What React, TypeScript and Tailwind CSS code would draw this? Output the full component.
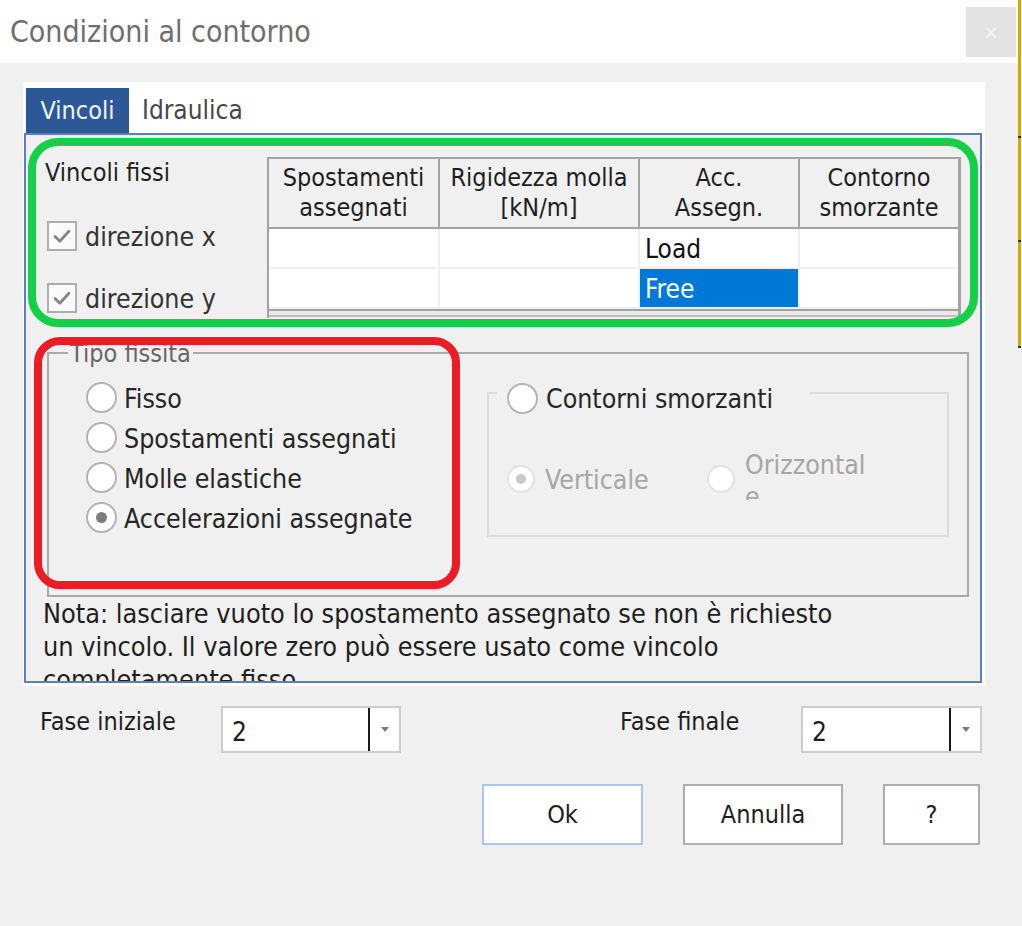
import React from 'react';

const FONT = "font-['DejaVu_Sans_Condensed','DejaVu_Sans',sans-serif]";

function CheckBox() {
  return (
    <div className="flex h-[30px] w-[30px] items-center justify-center border-2 border-[#adadad] bg-[#fafafa]">
      <svg viewBox="0 0 30 30" className="h-[28px] w-[28px]">
        <path d="M7 15.5 L12.5 21 L23 9.5" fill="none" stroke="#858585" strokeWidth="3.2" strokeLinecap="round" strokeLinejoin="round" />
      </svg>
    </div>
  );
}

function Radio({ checked = false, disabled = false }: { checked?: boolean; disabled?: boolean }) {
  return (
    <div
      className={
        disabled
          ? 'flex h-[28px] w-[28px] shrink-0 items-center justify-center rounded-full border-2 border-[#e2e2e2] bg-white'
          : 'flex h-[31px] w-[31px] shrink-0 items-center justify-center rounded-full border-2 border-[#b4b4b4] bg-white'
      }
    >
      {checked && (
        <div className={disabled ? 'h-[10px] w-[10px] rounded-full bg-[#c8c8c8]' : 'h-[11px] w-[11px] rounded-full bg-[#7d7d7d]'} />
      )}
    </div>
  );
}

function Combo({ value, width }: { value: string; width: string }) {
  return (
    <div className={`flex h-[47px] items-center border-2 border-[#cdcdcd] bg-white ${width}`}>
      <span className="flex-1 pl-[9px] pt-[4px] text-[26px] leading-none text-[#1e1e1e]">{value}</span>
      <div className="h-[43px] w-[2px] bg-[#1a1a1a]" />
      <div className="flex w-[29px] items-center justify-center">
        <svg viewBox="0 0 8 5" className="h-[5px] w-[8px]">
          <path d="M0 0 L8 0 L4 5 Z" fill="#7a7a7a" />
        </svg>
      </div>
    </div>
  );
}

const headers = [
  ['Spostamenti', 'assegnati'],
  ['Rigidezza molla', '[kN/m]'],
  ['Acc.', 'Assegn.'],
  ['Contorno', 'smorzante'],
];
const colWidths = ['w-[171px]', 'w-[200px]', 'w-[160px]', 'w-[158px]'];

function BoundaryGrid() {
  return (
    <div className="flex h-[161px] w-[694px] flex-col border-t-2 border-l-2 border-r-[3px] border-[#a3a3a3] bg-[#f0f0f0]">
      <div className="flex h-[70px] border-b-2 border-[#a3a3a3]">
        {headers.map((h, i) => (
          <div
            key={i}
            className={`flex flex-col items-center justify-center text-[25px] leading-[30px] text-[#1e1e1e] ${colWidths[i]} ${i < 3 ? 'border-r-2 border-[#a3a3a3]' : ''}`}
          >
            <span>{h[0]}</span>
            <span>{h[1]}</span>
          </div>
        ))}
      </div>
      {[
        ['', '', 'Load', ''],
        ['', '', 'Free', ''],
      ].map((row, r) => (
        <div key={r} className="flex h-[40px] border-b-2 border-[#f0f0f0] bg-white">
          {row.map((cell, c) => {
            const selected = cell === 'Free';
            return (
              <div
                key={c}
                className={`flex items-center pl-[5px] pt-[2px] text-[26px] ${colWidths[c]} ${c < 3 ? 'border-r-2 border-[#f0f0f0]' : ''} ${
                  selected ? 'bg-[#0078d7] text-white' : 'text-[#111]'
                }`}
              >
                {cell}
              </div>
            );
          })}
        </div>
      ))}
      <div className="h-[2px] bg-[#a3a3a3]" />
      <div className="h-[4px] bg-[#e9e9e9]" />
      <div className="h-[2px] bg-[#bdbdbd]" />
    </div>
  );
}

export default function App() {
  return (
    <div className={`relative flex h-[926px] w-[1022px] overflow-hidden bg-white ${FONT}`}>
      <div className="flex h-full w-[1018px] flex-col">
        {/* title bar */}
        <div className="flex h-[63px] shrink-0 items-start justify-between bg-white">
          <div className="pl-[10px] pt-[15px] text-[30px] leading-[34px] text-[#6e6e6e]">Condizioni al contorno</div>
          <div className="mr-[2px] mt-[7px] flex h-[50px] w-[50px] items-center justify-center bg-[#e3e3e3] text-[20px] text-[#f6f6f6]">×</div>
        </div>

        {/* dialog body */}
        <div className="flex flex-1 flex-col bg-[#f0f0f0]">
          {/* tab control */}
          <div className="ml-[23px] mt-[19px] flex h-[604px] w-[962px] flex-col bg-white">
            <div className="flex h-[51px] items-end pl-[3px]">
              <div className="flex h-[45px] w-[103px] items-center justify-center bg-[#2c5898] text-[25px] text-[#f2f5fb]">Vincoli</div>
              <div className="flex h-[45px] items-center pl-[13px] text-[26px] text-[#474747]">Idraulica</div>
            </div>

            <div className="ml-[1px] flex h-[550px] w-[958px] flex-col overflow-hidden border-2 border-[#5b7fbd] bg-[#f0f0f0]">
              {/* fixed constraints + grid */}
              <div className="flex pt-[22px]">
                <div className="flex w-[241px] flex-col pl-[19px] text-[#1e1e1e]">
                  <div className="text-[25px] leading-[32px]">Vincoli fissi</div>
                  <div className="mt-[32px] flex h-[30px] items-center gap-[8px] pl-[2px]">
                    <CheckBox />
                    <span className="pt-[2px] text-[26.5px] text-[#333]">direzione x</span>
                  </div>
                  <div className="mt-[32px] flex h-[30px] items-center gap-[8px] pl-[2px]">
                    <CheckBox />
                    <span className="pt-[2px] text-[26.5px] text-[#333]">direzione y</span>
                  </div>
                </div>
                <BoundaryGrid />
              </div>

              {/* Tipo fissita group */}
              <div className="relative ml-[21px] mt-[34px] h-[245px] w-[922px] shrink-0 border-2 border-[#a9a9a9]">
                <div className="absolute left-[19px] top-[-15px] bg-[#f0f0f0] px-[2px] text-[25px] leading-[30px] text-[#666]">Tipo fissita</div>

                <div className="flex flex-col gap-[9px] pl-[37px] pt-[28px]">
                  {['Fisso', 'Spostamenti assegnati', 'Molle elastiche', 'Accelerazioni assegnate'].map((label, i) => (
                    <div key={label} className="flex h-[31px] items-center gap-[7px]">
                      <Radio checked={i === 3} />
                      <span className="pt-[2px] text-[26.5px] text-[#262626]">{label}</span>
                    </div>
                  ))}
                </div>

                {/* damping boundaries sub-group */}
                <div className="absolute left-[438px] top-[38px] h-[145px] w-[462px] border-2 border-[#dcdcdc]">
                  <div className="absolute left-[8px] top-[-12px] flex h-[32px] w-[313px] items-center gap-[8px] bg-[#f0f0f0] pl-[10px]">
                    <Radio />
                    <span className="pt-[2px] text-[26.5px] text-[#262626]">Contorni smorzanti</span>
                  </div>
                  <div className="flex pl-[18px] pt-[70px]">
                    <div className="flex h-[30px] w-[200px] items-center gap-[10px]">
                      <Radio checked disabled />
                      <span className="pt-[2px] text-[26.5px] text-[#a6a6a6]">Verticale</span>
                    </div>
                    <div className="flex h-[30px] items-center gap-[10px]">
                      <Radio disabled />
                      <div className="mt-[-5px] h-[47px] w-[130px] overflow-hidden">
                        <div className="mt-[-4px] text-[26.5px] leading-[32px] text-[#a6a6a6]">
                          Orizzontal
                          <br />e
                        </div>
                      </div>
                    </div>
                  </div>
                </div>
              </div>

              {/* note */}
              <div className="pl-[17px] text-[26.8px] leading-[33px] text-[#1e1e1e]">
                <div className="whitespace-nowrap">Nota: lasciare vuoto lo spostamento assegnato se non è richiesto</div>
                <div className="whitespace-nowrap">un vincolo. Il valore zero può essere usato come vincolo</div>
                <div className="whitespace-nowrap">completamente fisso.</div>
              </div>
            </div>
          </div>

          {/* phase selectors */}
          <div className="mt-[20px] flex items-start pl-[40px] text-[#1e1e1e]">
            <div className="w-[181px] pt-[1px] text-[25px] leading-[30px]">Fase iniziale</div>
            <Combo value="2" width="w-[180px]" />
            <div className="ml-[219px] w-[181px] pt-[1px] text-[25px] leading-[30px]">Fase finale</div>
            <Combo value="2" width="w-[181px]" />
          </div>

          {/* buttons */}
          <div className="ml-[482px] mt-[31px] flex gap-[40px] text-[25px] text-[#1e1e1e]">
            <button className="flex h-[61px] w-[161px] items-center justify-center border-2 border-[#aac6ef] bg-white">Ok</button>
            <button className="flex h-[61px] w-[160px] items-center justify-center border-2 border-[#adadad] bg-white">Annulla</button>
            <button className="flex h-[61px] w-[97px] items-center justify-center border-2 border-[#adadad] bg-white">?</button>
          </div>
        </div>
      </div>

      {/* edge of the window behind */}
      <div className="flex w-[4px] flex-col">
        <div className="flex h-[348px] w-[3px] flex-col bg-[#d5a900]">
          <div className="mt-[136px] h-[2px] bg-[#333]" />
          <div className="mt-[102px] h-[2px] bg-[#333]" />
          <div className="mt-auto h-[2px] bg-[#333]" />
        </div>
        <div className="flex-1 bg-[#f0f0f0]" />
      </div>

      {/* highlight frames drawn over the dialog */}
      <div className="pointer-events-none absolute left-[28px] top-[138px] h-[189px] w-[950px] rounded-[30px] border-[8px] border-[#14cf48]" />
      <div className="pointer-events-none absolute left-[34px] top-[337px] h-[252px] w-[426px] rounded-[26px] border-[8px] border-[#ec1c24]" />
    </div>
  );
}
